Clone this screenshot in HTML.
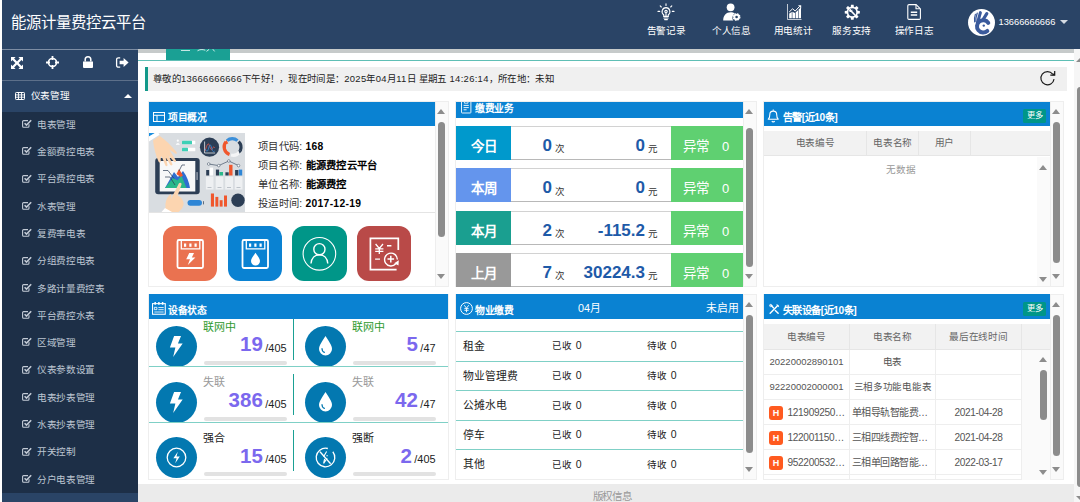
<!DOCTYPE html>
<html lang="zh-CN">
<head>
<meta charset="utf-8">
<title>能源计量费控云平台</title>
<style>
*{box-sizing:border-box;margin:0;padding:0}
html,body{width:1080px;height:502px;overflow:hidden;background:#fff}
body{position:relative;font-family:"Liberation Sans",sans-serif;font-size:12px;color:#333}
.abs{position:absolute}
svg{display:block;position:absolute;overflow:visible}
/* header */
#hdr{left:2px;top:0;width:1078px;height:49px;background:#2a4466}
#title{left:9px;top:11px;font-size:15.350px;color:#fff;white-space:nowrap;line-height:24px}
.nav{top:0;width:62px;height:49px;text-align:center;color:#fff;font-size:9.600px;white-space:nowrap}
.nav span{position:absolute;left:-10px;right:-10px;top:23.500px;line-height:14px;text-align:center;letter-spacing:-0.3px}
/* sidebar */
#side{left:2px;top:49px;width:136px;height:453px;background:#1d2f47}
#tool{left:0;top:0;width:136px;height:32px;background:#2a4466;border-top:1px solid #7d8da3;border-bottom:1px solid #5d708a}
#grp{left:0;top:32px;width:136px;height:30.500px;background:#2a4466;color:#fff;font-size:9.600px;letter-spacing:-.4px;line-height:29px}
.mi{left:0;width:136px;height:27px;line-height:27px;color:#bcc5d1;font-size:9.600px;letter-spacing:-.4px;white-space:nowrap}
.mi b{position:absolute;left:35.200px;top:.8px;font-weight:normal}
/* content */
#shadow{left:138px;top:48.800px;width:936px;height:4px;background:#c6caca}
#tab{left:165.600px;top:49px;width:64.500px;height:11.500px;background:#1aa094}
#tline{left:138px;top:60px;width:936px;height:1px;background:#5fbfb5}
#note{left:145px;top:67px;width:922px;height:24px;background:#f0f0f0;border-left:3px solid #12998a;font-size:9.45px;letter-spacing:.3px;line-height:24px;color:#222;white-space:nowrap;padding-left:5px}
.panel{background:#fff}
.ph{background:#0a82d2;color:#fff;font-weight:bold;font-size:11px;white-space:nowrap;letter-spacing:-.42px}
.sb{background:#fafafa;border:1px solid #eee}
.thumb{background:#8c8c8c;border-radius:4px}
.arr-u{width:0;height:0;border-left:4.5px solid transparent;border-right:4.5px solid transparent;border-bottom:5px solid #8c8c8c}
.arr-d{width:0;height:0;border-left:4.5px solid transparent;border-right:4.5px solid transparent;border-top:5px solid #8c8c8c}

.wrap{border:1px solid #eee;background:#fff}
.pi{font-size:10.300px;letter-spacing:.3px;line-height:14px;white-space:nowrap;color:#333}
.pi b{color:#000}
.btn{top:226px;width:54.500px;height:54.500px;border-radius:12px}
.prow{left:456px;width:287px;height:34px;border:1px solid #d2d2d2;border-bottom:1px solid #b8b8b8;background:#fff}
.plab{left:-1px;top:-1px;width:55px;height:34px;color:#fff;font-weight:bold;font-size:13.5px;line-height:42px;text-align:center}
.pgreen{left:214px;top:-1px;width:73px;height:34px;background:#5fd071;color:#fff;font-size:13.5px;line-height:42px;white-space:nowrap}
.num{color:#1e5aa8;font-weight:bold;font-size:17px;line-height:20px;white-space:nowrap;text-align:right}
.unit{font-size:9.5px;color:#333;line-height:12px}
.th{background:#f2f2f2;color:#666;font-size:9.6px;letter-spacing:-.2px;text-align:center;white-space:nowrap;border-right:1px solid #e6e6e6;border-bottom:1px solid #e6e6e6}
.more{background:#009688;color:#fff;font-size:8.2px;line-height:14.600px;text-align:center;border-radius:1.5px;width:23.300px;height:14.600px;font-weight:normal;font-family:"Liberation Serif",serif}

.circ{width:41px;height:41px;border-radius:50%;background:#0378b0}
.dl{font-size:11px;line-height:14px;white-space:nowrap}
.dn{color:#7b68ee;font-weight:bold;font-size:20.500px;line-height:24px;white-space:nowrap;text-align:right}
.dn i{font-style:normal;font-weight:normal;color:#222;font-size:10.900px;margin-left:2.500px;position:relative;top:.9px}
.bar{height:4px;border-radius:2px;background:#e2e2e2;width:83px}
.vsep{width:1px;background:#1aa094;height:41px}
.hsep{height:1px;background:#7fd0c6}
.fee{font-size:10.800px;line-height:14px;color:#222;white-space:nowrap}
.fee2{font-size:9.500px;line-height:14px;color:#222;white-space:nowrap;word-spacing:2.500px;letter-spacing:-.5px}
.fee2 u{text-decoration:none;font-size:10.500px}
.td{font-size:9.500px;letter-spacing:-.3px;color:#555;white-space:nowrap;overflow:hidden;border-right:1px solid #eee;border-bottom:1px solid #eee;height:25px;line-height:24px;text-align:center}
.hb{width:14px;height:14px;border-radius:3px;background:#ff5a1f;color:#fff;font-weight:bold;font-size:9px;line-height:14px;text-align:center}
#foot{left:138px;top:484px;width:936px;padding-left:12px;letter-spacing:-.3px;height:18px;background:#ebebeb;color:#999;font-size:10.5px;line-height:24px;text-align:center}
</style>
</head>
<body>
<!-- HEADER -->
<div id="hdr" class="abs">
  <div id="title" class="abs">能源计量费控云平台</div>

  <!-- nav: alarm -->
  <div class="nav abs" style="left:633px"><span>告警记录</span>
    <svg style="left:22px;top:3px" width="18" height="18" viewBox="0 0 18 18" fill="none" stroke="#fff" stroke-width="1.1" stroke-linecap="round">
      <path d="M9 4.6a4 4 0 0 1 2.3 7.2v1.6H6.7v-1.6A4 4 0 0 1 9 4.6z"/><path d="M6.9 15h4.2M7.6 16.6h2.8"/>
      <circle cx="9" cy="8.6" r="1.2"/><path d="M9 9.8v3.4"/>
      <path d="M9 0.8v1.6M3.2 2.9l1.1 1.1M14.8 2.9l-1.1 1.1M1 8.4h1.7M17 8.4h-1.7"/>
    </svg></div>
  <!-- nav: person -->
  <div class="nav abs" style="left:698.500px"><span>个人信息</span>
    <svg style="left:21px;top:3px" width="19" height="18" viewBox="0 0 19 18" fill="#fff">
      <circle cx="8.6" cy="4.3" r="3.9"/>
      <path d="M1.2 17.5c0-5.2 3-8.3 7.4-8.3 1.8 0 3.2.5 4.3 1.4a4.6 4.6 0 0 0-1.6 6.9z"/>
      <circle cx="14.6" cy="14" r="3.3" stroke="#fff" stroke-width="1.2" stroke-dasharray="1.5 1.1" fill="#fff"/>
      <circle cx="14.6" cy="14" r="1.3" fill="#2a4466"/>
    </svg></div>
  <!-- nav: stats -->
  <div class="nav abs" style="left:760.200px"><span>用电统计</span>
    <svg style="left:24.500px;top:4px" width="15" height="16" viewBox="0 0 15 16" fill="#fff">
      <path d="M0.500 0v15.500H14.500" fill="none" stroke="#fff" stroke-width="0.800" opacity=".9"/>
      <path d="M2.200 14.200V9.600l2.600-1.600v6.200zM5.400 14.200V7.800l2.600 1.200v5.200zM8.600 14.200V8.600l2.400-2.400v8zM11.600 14.200V5.400l2.400-2.200v11z"/>
      <path d="M2.200 8l3.400-3.200 2.600 2.200 4.400-4.600" fill="none" stroke="#fff" stroke-width="1"/><path d="M11 1.200h3.200v3.200z"/>
    </svg></div>
  <!-- nav: support -->
  <div class="nav abs" style="left:818.800px"><span>服务支持</span>
    <svg style="left:22.800px;top:3.700px" width="16.600" height="16.600" viewBox="0 0 18 18">
      <path d="M14.86 7.30 L17.18 7.57 L17.18 10.43 L14.86 10.70 L14.35 11.94 L15.79 13.77 L13.77 15.79 L11.94 14.35 L10.70 14.86 L10.43 17.18 L7.57 17.18 L7.30 14.86 L6.06 14.35 L4.23 15.79 L2.21 13.77 L3.65 11.94 L3.14 10.70 L0.82 10.43 L0.82 7.57 L3.14 7.30 L3.65 6.06 L2.21 4.23 L4.23 2.21 L6.06 3.65 L7.30 3.14 L7.57 0.82 L10.43 0.82 L10.70 3.14 L11.94 3.65 L13.77 2.21 L15.79 4.23 L14.35 6.06z M9 4.700a4.300 4.300 0 1 0 0 8.600a4.300 4.300 0 1 0 0-8.600z" fill="#fff" fill-rule="evenodd"/>
      <path d="M6.800 6.600l5.600 5.800" stroke="#fff" stroke-width="1.700" stroke-linecap="round"/><path d="M5.600 7.800a2.200 2.200 0 0 1 2.600-2.600l-1.200 1.200.9.900 1.200-1.200a2.200 2.200 0 0 1-2.600 2.600z" fill="#fff"/>
    </svg></div>
  <!-- nav: log -->
  <div class="nav abs" style="left:881px"><span>操作日志</span>
    <svg style="left:24px;top:4px" width="14" height="16" viewBox="0 0 14 16" fill="none" stroke="#fff" stroke-width="1.1" stroke-linejoin="round">
      <path d="M2 0.6h7.2l4.2 4.2v9.4a1.2 1.2 0 0 1-1.2 1.2H2A1.2 1.2 0 0 1 .8 14.2V1.8A1.2 1.2 0 0 1 2 .6z"/><path d="M9 .8v4h4"/>
      <path d="M3.8 8.2h6.4M3.8 11h6.4" stroke-width="1.4"/>
    </svg></div>
  <!-- avatar -->
  <div class="abs" style="left:966.100px;top:8.700px;width:27.200px;height:27.200px;border-radius:50%;background:#fff"></div>
  <svg style="left:966.100px;top:8.700px" width="27.200" height="27.200" viewBox="0 0 27.200 27.200" fill="none" stroke="#3a5a9c" stroke-linecap="round">
    <path d="M20.280 13.840A6.200 6.200 0 1 0 19.350 22" stroke-width="4"/>
    <path d="M9.600 13.500L12.400 3.600" stroke-width="3"/><path d="M14.600 11.400L18.800 4.700" stroke-width="3.200"/>
    <path d="M7.400 5.200C6.400 8 6.200 10.500 6.600 13" stroke-width="1.100"/><path d="M9.200 4.200C8 7.500 7.600 10 7.900 12.500" stroke-width="1.300"/>
    <circle cx="15.800" cy="16.600" r="1.200" fill="#3a5a9c" stroke="none"/>
  </svg>
  <div class="abs" style="left:996.5px;top:15px;font-size:9.300px;line-height:14px;color:#fff;white-space:nowrap">13666666666</div>
  <div class="abs" style="left:1057.500px;top:19.800px;width:0;height:0;border-left:4px solid transparent;border-right:4px solid transparent;border-top:4px solid #d5dbe3"></div>
</div>

<!-- SIDEBAR -->
<div id="side" class="abs">

  <div id="tool" class="abs">
    <svg style="left:9px;top:6.500px" width="12" height="12" viewBox="0 0 12 12" fill="#fff"><path d="M0 0h4.600L3.100 1.500 6 4.400 8.900 1.500 7.400 0H12v4.600l-1.500-1.500L7.600 6l2.900 2.900L12 7.400V12H7.400l1.500-1.500L6 7.600 3.100 10.500 4.600 12H0V7.400l1.500 1.500L4.400 6 1.500 3.100 0 4.600z"/></svg>
    <svg style="left:43.500px;top:6px" width="13" height="13" viewBox="0 0 13 13" fill="none" stroke="#fff"><circle cx="6.500" cy="6.500" r="4" stroke-width="1.600"/><path d="M6.500 0v4M6.500 9v4M0 6.500h4M9 6.500h4" stroke-width="1.800"/></svg>
    <svg style="left:80.500px;top:6px" width="10" height="12" viewBox="0 0 10 12" fill="#fff"><path d="M0 5.500h10V11a1 1 0 0 1-1 1H1a1 1 0 0 1-1-1z"/><path d="M2.200 5.500V3.600a2.800 2.800 0 0 1 5.600 0v1.900" fill="none" stroke="#fff" stroke-width="1.500"/></svg>
    <svg style="left:114px;top:6.500px" width="13" height="11" viewBox="0 0 13 11" fill="#fff"><path d="M4.200 .8H2.400A1.800 1.800 0 0 0 .6 2.600v5.800a1.800 1.800 0 0 0 1.800 1.800h1.800" fill="none" stroke="#fff" stroke-width="1.300"/><path d="M3.600 3.700h4V1l5 4.500-5 4.500V7.300h-4z"/></svg>
  </div>
  <div id="grp" class="abs">
    <svg style="left:13px;top:10.500px" width="10" height="8" viewBox="0 0 10 8" fill="none" stroke="#fff"><rect x=".5" y=".5" width="9" height="7" rx=".8" stroke-width="1"/><path d="M.5 2.900h9M.5 5.200h9M3.500 .5v7M6.500 .5v7" stroke-width=".9"/></svg>
    <span class="abs" style="left:28.800px">仪表管理</span>
    <div class="abs" style="left:121.500px;top:12.500px;width:0;height:0;border-left:4px solid transparent;border-right:4px solid transparent;border-bottom:4px solid #fff"></div>
  </div>
  <div class="mi abs" style="top:61px"><svg style="left:20px;top:9px" width="10" height="9" viewBox="0 0 10 9" fill="none" stroke="#c3cbd6"><path d="M7 5.200v2a1 1 0 0 1-1 1H1.600a1 1 0 0 1-1-1V2.600a1 1 0 0 1 1-1H6" stroke-width="1.100"/><path d="M2.600 4.200l1.900 1.900L9.200 1.300" stroke-width="1.600"/></svg><b>电表管理</b></div>
  <div class="mi abs" style="top:88.3px"><svg style="left:20px;top:9px" width="10" height="9" viewBox="0 0 10 9" fill="none" stroke="#c3cbd6"><path d="M7 5.200v2a1 1 0 0 1-1 1H1.600a1 1 0 0 1-1-1V2.600a1 1 0 0 1 1-1H6" stroke-width="1.100"/><path d="M2.600 4.200l1.900 1.900L9.200 1.300" stroke-width="1.600"/></svg><b>金额费控电表</b></div>
  <div class="mi abs" style="top:115.6px"><svg style="left:20px;top:9px" width="10" height="9" viewBox="0 0 10 9" fill="none" stroke="#c3cbd6"><path d="M7 5.200v2a1 1 0 0 1-1 1H1.600a1 1 0 0 1-1-1V2.600a1 1 0 0 1 1-1H6" stroke-width="1.100"/><path d="M2.600 4.200l1.900 1.900L9.200 1.300" stroke-width="1.600"/></svg><b>平台费控电表</b></div>
  <div class="mi abs" style="top:142.9px"><svg style="left:20px;top:9px" width="10" height="9" viewBox="0 0 10 9" fill="none" stroke="#c3cbd6"><path d="M7 5.200v2a1 1 0 0 1-1 1H1.600a1 1 0 0 1-1-1V2.600a1 1 0 0 1 1-1H6" stroke-width="1.100"/><path d="M2.600 4.200l1.900 1.900L9.200 1.300" stroke-width="1.600"/></svg><b>水表管理</b></div>
  <div class="mi abs" style="top:170.2px"><svg style="left:20px;top:9px" width="10" height="9" viewBox="0 0 10 9" fill="none" stroke="#c3cbd6"><path d="M7 5.200v2a1 1 0 0 1-1 1H1.600a1 1 0 0 1-1-1V2.600a1 1 0 0 1 1-1H6" stroke-width="1.100"/><path d="M2.600 4.200l1.900 1.900L9.200 1.300" stroke-width="1.600"/></svg><b>复费率电表</b></div>
  <div class="mi abs" style="top:197.5px"><svg style="left:20px;top:9px" width="10" height="9" viewBox="0 0 10 9" fill="none" stroke="#c3cbd6"><path d="M7 5.200v2a1 1 0 0 1-1 1H1.600a1 1 0 0 1-1-1V2.600a1 1 0 0 1 1-1H6" stroke-width="1.100"/><path d="M2.600 4.200l1.900 1.900L9.200 1.300" stroke-width="1.600"/></svg><b>分组费控电表</b></div>
  <div class="mi abs" style="top:224.8px"><svg style="left:20px;top:9px" width="10" height="9" viewBox="0 0 10 9" fill="none" stroke="#c3cbd6"><path d="M7 5.200v2a1 1 0 0 1-1 1H1.600a1 1 0 0 1-1-1V2.600a1 1 0 0 1 1-1H6" stroke-width="1.100"/><path d="M2.600 4.200l1.900 1.900L9.200 1.300" stroke-width="1.600"/></svg><b>多路计量费控表</b></div>
  <div class="mi abs" style="top:252.1px"><svg style="left:20px;top:9px" width="10" height="9" viewBox="0 0 10 9" fill="none" stroke="#c3cbd6"><path d="M7 5.200v2a1 1 0 0 1-1 1H1.600a1 1 0 0 1-1-1V2.600a1 1 0 0 1 1-1H6" stroke-width="1.100"/><path d="M2.600 4.200l1.900 1.900L9.200 1.300" stroke-width="1.600"/></svg><b>平台费控水表</b></div>
  <div class="mi abs" style="top:279.4px"><svg style="left:20px;top:9px" width="10" height="9" viewBox="0 0 10 9" fill="none" stroke="#c3cbd6"><path d="M7 5.200v2a1 1 0 0 1-1 1H1.600a1 1 0 0 1-1-1V2.600a1 1 0 0 1 1-1H6" stroke-width="1.100"/><path d="M2.600 4.200l1.900 1.900L9.200 1.300" stroke-width="1.600"/></svg><b>区域管理</b></div>
  <div class="mi abs" style="top:306.7px"><svg style="left:20px;top:9px" width="10" height="9" viewBox="0 0 10 9" fill="none" stroke="#c3cbd6"><path d="M7 5.200v2a1 1 0 0 1-1 1H1.600a1 1 0 0 1-1-1V2.600a1 1 0 0 1 1-1H6" stroke-width="1.100"/><path d="M2.600 4.200l1.900 1.900L9.200 1.300" stroke-width="1.600"/></svg><b>仪表参数设置</b></div>
  <div class="mi abs" style="top:334px"><svg style="left:20px;top:9px" width="10" height="9" viewBox="0 0 10 9" fill="none" stroke="#c3cbd6"><path d="M7 5.200v2a1 1 0 0 1-1 1H1.600a1 1 0 0 1-1-1V2.600a1 1 0 0 1 1-1H6" stroke-width="1.100"/><path d="M2.600 4.200l1.900 1.900L9.200 1.300" stroke-width="1.600"/></svg><b>电表抄表管理</b></div>
  <div class="mi abs" style="top:361.3px"><svg style="left:20px;top:9px" width="10" height="9" viewBox="0 0 10 9" fill="none" stroke="#c3cbd6"><path d="M7 5.200v2a1 1 0 0 1-1 1H1.600a1 1 0 0 1-1-1V2.600a1 1 0 0 1 1-1H6" stroke-width="1.100"/><path d="M2.600 4.200l1.900 1.900L9.200 1.300" stroke-width="1.600"/></svg><b>水表抄表管理</b></div>
  <div class="mi abs" style="top:388.6px"><svg style="left:20px;top:9px" width="10" height="9" viewBox="0 0 10 9" fill="none" stroke="#c3cbd6"><path d="M7 5.200v2a1 1 0 0 1-1 1H1.600a1 1 0 0 1-1-1V2.600a1 1 0 0 1 1-1H6" stroke-width="1.100"/><path d="M2.600 4.200l1.900 1.900L9.200 1.300" stroke-width="1.600"/></svg><b>开关控制</b></div>
  <div class="mi abs" style="top:415.9px"><svg style="left:20px;top:9px" width="10" height="9" viewBox="0 0 10 9" fill="none" stroke="#c3cbd6"><path d="M7 5.200v2a1 1 0 0 1-1 1H1.600a1 1 0 0 1-1-1V2.600a1 1 0 0 1 1-1H6" stroke-width="1.100"/><path d="M2.600 4.200l1.900 1.900L9.200 1.300" stroke-width="1.600"/></svg><b>分户电表管理</b></div>
  <div class="abs" style="left:0;top:444px;width:136px;height:9px;background:#2a4466"></div>
</div>

<!-- CONTENT CHROME -->
<div id="shadow" class="abs"></div>
<div id="tab" class="abs"><div class="abs" style="left:15.500px;top:0.500px;width:8.500px;height:1.200px;background:#fff;opacity:.75"></div><svg style="left:31px;top:0" width="19" height="3" viewBox="0 0 19 3" fill="none" stroke="#fff" stroke-width="1" opacity=".8"><path d="M.5 1.800c2-1.400 5-1.600 7.800-.6M9.500 2.400l2.600-2M15.800 .2l1.800 2.200"/></svg></div>
<div id="tline" class="abs"></div>
<div id="note" class="abs">尊敬的13666666666下午好！，现在时间是：2025年04月11日 星期五 14:26:14，所在地：未知</div>

<!-- PANELS -->

<!-- ============ PANEL: project overview ============ -->
<div class="abs wrap" style="left:148px;top:101px;width:301px;height:186px"></div>
<div class="abs ph" style="left:149px;top:101.5px;width:286px;height:24.5px"></div>
<svg style="left:153px;top:111.800px" width="12" height="10" viewBox="0 0 12 10" fill="none" stroke="#fff" stroke-width="1"><rect x=".5" y=".5" width="11" height="9"/><path d="M.5 3.300h11M4 3.300v6.200"/></svg>
<div class="abs ph" style="left:168px;top:111px;background:none;line-height:14px;font-size:9.800px">项目概况</div>
<div id="illus" class="abs" style="left:149px;top:133px;width:95.500px;height:78.500px;background:#d9dde1;overflow:hidden"><svg style="left:0;top:0" width="95.5" height="79" viewBox="0 0 95.5 79">
<rect width="95.5" height="79" fill="#d9dde1"/>
<!-- person + bars -->
<circle cx="28.800" cy="7.700" r="1.100" fill="#fff"/><path d="M26.800 11.800c0-2.200 4-2.200 4 0z" fill="#fff"/>
<rect x="33" y="7.800" width="13.300" height="3.500" rx=".6" fill="#fff"/><rect x="33" y="7.800" width="10" height="3.500" rx=".6" fill="#3dd0b6"/>
<rect x="33" y="14.800" width="13.300" height="3.500" rx=".6" fill="#fff"/><rect x="33" y="14.800" width="6" height="3.500" rx=".6" fill="#3dd0b6"/>
<!-- dark circle chart -->
<circle cx="60.500" cy="14.200" r="9.600" fill="#2c3e55"/>
<path d="M55.600 8.500v11.500h10.500" fill="none" stroke="#fff" stroke-width=".7"/>
<path d="M56.200 18c1.500-6 3-9 4-6s2 6 3 4 1.500-3 2.500-1" fill="none" stroke="#e8574a" stroke-width=".8"/>
<path d="M56.200 16c1.500 3 2.500 3 3.500-1s2-4 3 0 1.500 4 3 3" fill="none" stroke="#3b8fd9" stroke-width=".8"/>
<!-- donut -->
<g fill="none" stroke-width="3.200">
<path d="M78 7.600A8 8 0 0 1 88.500 7.600" stroke="#3b8fd9"/>
<path d="M89.600 8.600A8 8 0 0 1 91.300 17.500" stroke="#2c3e55"/>
<path d="M90.600 18.800A8 8 0 0 1 82 22" stroke="#f4f5f6"/>
<path d="M80.500 21.400A8 8 0 0 1 77 8.700" stroke="#f0572d"/>
</g>
<path d="M75 11.500l2.500-4.500 1.800 3.600z" fill="#f0572d"/><path d="M93.200 17.500l-2.600 3.200-1.200-3.800z" fill="#2c3e55"/>
<!-- tablet -->
<rect x="6.200" y="25" width="44.500" height="36.200" rx="3" fill="#2c3e55"/>
<rect x="10.700" y="28" width="35.600" height="30.500" fill="#f7f8f8"/>
<rect x="47.300" y="39" width="1.600" height="8" rx=".6" fill="#8a95a3"/>
<path d="M16 55l9-16 4 5 5-6c4 5 6 11 7 17z" fill="#2f6fd0"/>
<path d="M16 55l8-10 4.500 2.500 4-5 5 12.500z" fill="#2bb88a"/>
<path d="M27.500 41l2.500-5 4 6.500-2.500 1.500z" fill="#f0572d"/>
<path d="M14 37.500h5l6 8M16 44h5l5 8M36 32h-3l-3 6" fill="none" stroke="#2c3e55" stroke-width=".7"/>
<!-- sleeve + hand top-left -->
<path d="M0 0h6L0 3.500z" fill="#1a8fe0"/><path d="M6 0L0 3.500v5L10.500 1.800 9.500 0z" fill="#fff"/>
<path d="M4 7.500L10.500 2.800c5.500 3.800 11.500 9.500 17 16.200 1 1.300-.3 2.400-1.500 1.600l-5.800-4 6.600 10.600c.9 1.500-.8 2.600-1.900 1.300l-5.600-6.600 4 8.800c.7 1.600-1.200 2.400-2.100 1l-4.700-7.600 2 7.600c.4 1.600-1.600 2-2.200.6l-3.800-9.300c-.8 1.500-1 3.300-.7 5.200.2 1.500-1.800 1.800-2.300.4C6.800 22.500 4.800 15 4 7.500z" fill="#fcd5b0"/>
<!-- line chart + bars -->
<path d="M59.700 31l10 1.600 10.100-4.600 9.700 4.600" fill="none" stroke="#2c3e55" stroke-width=".6"/>
<g fill="#fff" stroke="#2c3e55" stroke-width=".5"><circle cx="59.700" cy="31" r="1.300"/><circle cx="69.700" cy="32.600" r="1.300"/><circle cx="79.800" cy="28" r="1.300"/><circle cx="89.500" cy="32.600" r="1.300"/></g>
<g fill="#eef0f2"><rect x="56.900" y="43.500" width="7.600" height="13"/><rect x="66.700" y="43.500" width="7.600" height="13"/><rect x="76.200" y="43.500" width="7.800" height="13"/><rect x="85.800" y="43.500" width="7.700" height="13"/></g>
<g fill="#2c3e55"><rect x="57.200" y="37" width="3.100" height="5.500"/><rect x="66.900" y="36.600" width="3.200" height="5.900"/><rect x="76.400" y="39.300" width="3.300" height="3.200"/><rect x="86.100" y="37" width="3.300" height="5.500"/></g>
<rect x="60.600" y="34.600" width="3.500" height="7.900" fill="#fff"/><rect x="70.400" y="39" width="3.600" height="3.500" fill="#2bb88a"/><rect x="80.100" y="31.800" width="3.400" height="10.700" fill="#f0572d"/><rect x="89.800" y="36.600" width="3.400" height="5.900" fill="#2e86d6"/>
<g fill="#9aa3ad"><rect x="58.500" y="54.300" width="4" height=".6"/><rect x="68.500" y="54.300" width="4" height=".6"/><rect x="78" y="54.300" width="4" height=".6"/><rect x="87.500" y="54.300" width="4" height=".6"/></g>
<!-- bottom row -->
<rect x="38.500" y="66.900" width="14.500" height="5.800" rx="2.900" fill="#2e86d6"/><rect x="54.300" y="68.200" width=".7" height="3.200" fill="#2c3e55"/>
<g fill="#f0572d"><rect x="61.900" y="60.500" width="3.100" height="13.100"/><rect x="66.400" y="63.900" width="2.900" height="9.700"/><rect x="70.700" y="67.200" width="2.900" height="6.400"/><rect x="75" y="62.500" width="3" height="11.100"/></g>
<circle cx="89" cy="67.200" r="6.700" fill="#2c3e55"/>
<!-- hand bottom -->
<path d="M13 79l3.500-4.500c-.5-5 1-9.500 4-12.500.8-.8 1.800-.3 1.800.8l-.3 3.200 7.800-15.500c.9-1.700 3.300-.7 2.700 1.100l-3.800 10.800c3 1.500 5.300 4 5.800 7.200.5 3.500-1.500 6.900-5 9.400z" fill="#fcd5b0"/>
<path d="M12.500 79l3.500-4 7 4z" fill="#fff"/>
</svg></div>
<div class="abs pi" style="left:258px;top:140px">项目代码: <b>168</b></div>
<div class="abs pi" style="left:258px;top:159px">项目名称: <b>能源费控云平台</b></div>
<div class="abs pi" style="left:258px;top:178px">单位名称: <b>能源费控</b></div>
<div class="abs pi" style="left:258px;top:197px">投运时间: <b>2017-12-19</b></div>
<div class="abs" style="left:149px;top:212px;width:286px;height:1px;background:#e4e4e4"></div>
<div class="abs btn" style="left:162.800px;background:#ea7250"><svg style="left:0;top:0" width="54.500" height="54.500" viewBox="0 0 54.500 54.500" fill="none" stroke="#fff"><rect x="14.500" y="14" width="25.500" height="28" rx="1.400" stroke-width="1.800"/><path d="M18.300 14.600v8.300h18.500v-8.300" stroke-width="1.300"/><g fill="#fff" stroke="none"><rect x="21" y="17.500" width="2.200" height="3.300"/><rect x="26.300" y="17.500" width="2.200" height="3.300"/><rect x="31.500" y="17.500" width="2.200" height="3.300"/><path d="M26.200 27.100h4.800l-2.200 4.400h3.600l-7.600 7.400 2.200-5.600h-3.800z"/></g></svg></div>
<div class="abs btn" style="left:227.500px;background:#0a82d2"><svg style="left:0;top:0" width="54.500" height="54.500" viewBox="0 0 54.500 54.500" fill="none" stroke="#fff"><rect x="14.500" y="14" width="25.500" height="28" rx="1.400" stroke-width="1.800"/><path d="M18.300 14.600v8.300h18.500v-8.300" stroke-width="1.300"/><g fill="#fff" stroke="none"><rect x="21" y="17.500" width="2.200" height="3.300"/><rect x="26.300" y="17.500" width="2.200" height="3.300"/><rect x="31.500" y="17.500" width="2.200" height="3.300"/><path d="M27.500 26.800c2.300 3.400 4.500 5.800 4.500 8.200a4.500 4.500 0 0 1-9 0c0-2.400 2.200-4.800 4.500-8.200z"/></g></svg></div>
<div class="abs btn" style="left:292.400px;background:#009688"><svg style="left:0;top:0" width="54.500" height="54.500" viewBox="0 0 54.500 54.500" fill="none" stroke="#fff"><circle cx="27.400" cy="27.800" r="16.300" stroke-width="1.100"/><circle cx="27.400" cy="23.200" r="5.600" stroke-width="1.400"/><path d="M19 37.500c.5-5.500 4-8.800 8.400-8.800s7.900 3.300 8.400 8.800" stroke-width="1.400"/></svg></div>
<div class="abs btn" style="left:356.700px;background:#b94a48"><svg style="left:0;top:0" width="54.500" height="54.500" viewBox="0 0 54.500 54.500" fill="none" stroke="#fff"><path d="M41.300 24V12.300H13.400v31.400h26.200" stroke-width="1.700"/><path d="M18.600 18l3.700 4.400 3.700-4.400M22.300 22.400v5.600M18.200 22.800h8.200M18.200 25.400h8.200" stroke-width="1.300"/><path d="M30 19.800h4.400M18.100 33.100h4.900" stroke-width="1.400"/><path d="M38.800 37.800a6.400 6.400 0 1 1 1.600-4.300" stroke-width="1.400"/><path d="M33.800 29.800v6.600M30.500 33.100h6.600" stroke-width="1.500"/><path d="M37.200 37.200l4.600-3 -.3 5.200z" fill="#fff" stroke="none"/></svg></div>
<div class="abs sb" style="left:435px;top:101px;width:14px;height:186px"></div>
<div class="abs arr-u" style="left:436.9px;top:109px"></div>
<div class="abs arr-d" style="left:436.9px;top:274px"></div>
<div class="abs thumb" style="left:437.9px;top:122px;width:7px;height:114.500px"></div>

<!-- ============ PANEL: payment ============ -->
<div class="abs wrap" style="left:455px;top:101px;width:301px;height:186px"></div>
<div class="abs ph" style="left:456px;top:101.500px;width:287px;height:16px"></div>
<div class="abs" style="left:460.800px;top:101.500px;width:11px;height:12px;overflow:hidden"><svg style="left:0;top:0" width="10.400" height="11.600" viewBox="0 0 10.400 11.600" fill="none" stroke="#fff" stroke-width=".9"><rect x=".5" y="-.6" width="9.400" height="11.600" rx=".6"/><path d="M3.400 0v1.200h3.600V0" stroke-width=".8"/><path d="M2.600 3.400h5.200M2.600 5.600h5.200M2.600 7.800h3" stroke-width=".9"/></svg></div>
<div class="abs ph" style="left:475.300px;top:102.200px;background:none;line-height:14px;font-size:9.800px">缴费业务</div>
<div class="abs prow" style="top:125.600px">
  <div class="abs plab" style="background:#0099cc">今日</div>
  <div class="abs num" style="left:45px;width:50px;top:9px">0</div><div class="abs unit" style="left:98px;top:16.500px">次</div>
  <div class="abs num" style="left:95px;width:93px;top:9px">0</div><div class="abs unit" style="left:191px;top:16.500px">元</div>
  <div class="abs pgreen"><span class="abs" style="left:12px;top:0">异常</span><span class="abs" style="left:51px;top:0;font-size:13px">0</span></div>
</div>
<div class="abs prow" style="top:168.400px">
  <div class="abs plab" style="background:#6495ed">本周</div>
  <div class="abs num" style="left:45px;width:50px;top:9px">0</div><div class="abs unit" style="left:98px;top:16.500px">次</div>
  <div class="abs num" style="left:95px;width:93px;top:9px">0</div><div class="abs unit" style="left:191px;top:16.500px">元</div>
  <div class="abs pgreen"><span class="abs" style="left:12px;top:0">异常</span><span class="abs" style="left:51px;top:0;font-size:13px">0</span></div>
</div>
<div class="abs prow" style="top:210.600px">
  <div class="abs plab" style="background:#1a9f90">本月</div>
  <div class="abs num" style="left:45px;width:50px;top:9px">2</div><div class="abs unit" style="left:98px;top:16.500px">次</div>
  <div class="abs num" style="left:95px;width:93px;top:9px">-115.2</div><div class="abs unit" style="left:191px;top:16.500px">元</div>
  <div class="abs pgreen"><span class="abs" style="left:12px;top:0">异常</span><span class="abs" style="left:51px;top:0;font-size:13px">0</span></div>
</div>
<div class="abs prow" style="top:252.5px">
  <div class="abs plab" style="background:#999999">上月</div>
  <div class="abs num" style="left:45px;width:50px;top:9px">7</div><div class="abs unit" style="left:98px;top:16.500px">次</div>
  <div class="abs num" style="left:95px;width:93px;top:9px">30224.3</div><div class="abs unit" style="left:191px;top:16.500px">元</div>
  <div class="abs pgreen"><span class="abs" style="left:12px;top:0">异常</span><span class="abs" style="left:51px;top:0;font-size:13px">0</span></div>
</div>
<div class="abs sb" style="left:742.5px;top:101px;width:14px;height:186px"></div>
<div class="abs arr-u" style="left:745.0px;top:109px"></div>
<div class="abs arr-d" style="left:745.0px;top:274px"></div>
<div class="abs thumb" style="left:746.0px;top:128px;width:7px;height:139px"></div>

<!-- ============ PANEL: alarms ============ -->
<div class="abs wrap" style="left:763px;top:101px;width:301px;height:186px"></div>
<div class="abs ph" style="left:764px;top:101.500px;width:286px;height:24.500px"></div>
<svg style="left:767.300px;top:108.800px" width="12.500" height="13.300" viewBox="0 0 11 12" fill="none" stroke="#fff" stroke-width="1"><path d="M1 9.200c1.200-1 1.400-2 1.400-4.200a3.100 3.100 0 0 1 6.200 0c0 2.200.2 3.200 1.400 4.200z" stroke-linejoin="round"/><path d="M4.300 10.800a1.300 1.300 0 0 0 2.400 0M5.500 .4v1.200"/></svg>
<div class="abs ph" style="left:782.500px;top:110.700px;background:none;line-height:14px;font-size:10.200px">告警[近10条]</div>
<div class="abs more" style="left:1023px;top:108.500px">更多</div>
<div class="abs th" style="left:764px;top:131.300px;width:103.300px;height:25px;line-height:23.500px">电表编号</div>
<div class="abs th" style="left:867.300px;top:131.300px;width:51.700px;height:25px;line-height:23.500px">电表名称</div>
<div class="abs th" style="left:919px;top:131.300px;width:52px;height:25px;line-height:23.500px">用户</div>
<div class="abs th" style="left:971px;top:131.300px;width:79px;height:25px;border-right:none"></div>
<div class="abs" style="left:764px;top:159px;width:273px;height:22px;line-height:22px;text-align:center;color:#999;font-size:9.600px;letter-spacing:-.2px;padding-left:1px">无数据</div>
<div class="abs" style="left:1037px;top:157px;width:13px;height:129px;background:#fafafa"></div>
<div class="abs arr-u" style="left:1039px;top:164.500px"></div>
<div class="abs arr-d" style="left:1039px;top:277px"></div>
<div class="abs sb" style="left:1050px;top:101px;width:14px;height:186px"></div>
<div class="abs arr-u" style="left:1051.9px;top:109px"></div>
<div class="abs arr-d" style="left:1051.9px;top:274px"></div>
<div class="abs thumb" style="left:1052.9px;top:121.500px;width:7px;height:141.500px"></div>


<!-- ============ PANEL: device status ============ -->
<div class="abs wrap" style="left:148px;top:294px;width:301px;height:186px"></div>
<div class="abs ph" style="left:149px;top:294.200px;width:299px;height:24.400px"></div>
<svg style="left:152.200px;top:301.800px" width="13.800" height="12.800" viewBox="0 0 13 12" fill="none" stroke="#fff" stroke-width="1"><rect x=".5" y="1.500" width="12" height="10"/><path d="M3 0v2.600M6.500 0v2.600M10 0v2.600" stroke-width="1.400"/><path d="M2.200 5h2.400v2.200H2.200zM6 5.200h5M6 7.200h5M2.200 9.400h8.800" stroke-width=".8"/></svg>
<div class="abs ph" style="left:168px;top:304px;background:none;line-height:14px;font-size:9.800px">设备状态</div>
<div class="abs circ" style="left:155.5px;top:325.9px"><svg style="left:13.300px;top:10px" width="14.400" height="21" viewBox="0 0 15 23" fill="#fff"><path d="M5.200 0h7.600L9.400 8.200h5.200L4.200 23l2.400-10.400H.6z"/></svg></div>
<div class="abs dl" style="left:202.7px;top:319.5px;color:#2e9a2e">联网中</div>
<div class="abs dn" style="left:203.5px;width:83px;top:332.4px">19<i>/405</i></div>
<div class="abs bar" style="left:203.5px;top:361px"></div>
<div class="abs circ" style="left:304.5px;top:325.9px"><svg style="left:14px;top:10px" width="13" height="20" viewBox="0 0 13 20" fill="#fff"><path d="M6.500 0C9.500 5 13 9 13 13a6.500 6.500 0 0 1-13 0C0 9 3.500 5 6.500 0z"/><path d="M3 12.500c0 2 .9 3.300 2.400 3.900" fill="none" stroke="#0378b0" stroke-width="1.200" stroke-linecap="round"/></svg></div>
<div class="abs dl" style="left:351.7px;top:319.5px;color:#2e9a2e">联网中</div>
<div class="abs dn" style="left:352.5px;width:83px;top:332.4px">5<i>/47</i></div>
<div class="abs bar" style="left:352.5px;top:361px"></div>
<div class="abs circ" style="left:155.5px;top:381.5px"><svg style="left:13.300px;top:10px" width="14.400" height="21" viewBox="0 0 15 23" fill="#fff"><path d="M5.200 0h7.600L9.400 8.200h5.200L4.200 23l2.400-10.400H.6z"/></svg></div>
<div class="abs dl" style="left:202.7px;top:375.1px;color:#9a9a9a">失联</div>
<div class="abs dn" style="left:203.5px;width:83px;top:388px">386<i>/405</i></div>
<div class="abs bar" style="left:203.5px;top:416.6px"></div>
<div class="abs circ" style="left:304.5px;top:381.5px"><svg style="left:14px;top:10px" width="13" height="20" viewBox="0 0 13 20" fill="#fff"><path d="M6.500 0C9.500 5 13 9 13 13a6.500 6.500 0 0 1-13 0C0 9 3.500 5 6.500 0z"/><path d="M3 12.500c0 2 .9 3.300 2.400 3.900" fill="none" stroke="#0378b0" stroke-width="1.200" stroke-linecap="round"/></svg></div>
<div class="abs dl" style="left:351.7px;top:375.1px;color:#9a9a9a">失联</div>
<div class="abs dn" style="left:352.5px;width:83px;top:388px">42<i>/47</i></div>
<div class="abs bar" style="left:352.5px;top:416.6px"></div>
<div class="abs circ" style="left:155.5px;top:437.1px"><svg style="left:10px;top:10px" width="21" height="21" viewBox="0 0 21 21" fill="none" stroke="#fff" stroke-width="1.300"><circle cx="10.500" cy="10.500" r="9.300"/><path d="M11.800 4.800l-4.400 6.400h3.200l-1.400 5 4.600-6.600h-3.300z" fill="#fff" stroke="none"/></svg></div>
<div class="abs dl" style="left:202.7px;top:430.7px;color:#222">强合</div>
<div class="abs dn" style="left:203.5px;width:83px;top:443.6px">15<i>/405</i></div>
<div class="abs bar" style="left:203.5px;top:472.2px"></div>
<div class="abs circ" style="left:304.5px;top:437.1px"><svg style="left:10px;top:10px" width="21" height="21" viewBox="0 0 21 21" fill="none" stroke="#fff" stroke-width="1.300"><circle cx="10.500" cy="10.500" r="9.300" stroke-dasharray="52 6.400" transform="rotate(-38 10.500 10.500)"/><path d="M11.600 4.600L8.600 9.800M12.800 8.800l-1.400 0M9.600 11.800l-1 4.600 3.600-5.200" stroke-width="1.100"/><path d="M5 4.800l10.600 12" stroke-width="1.300"/></svg></div>
<div class="abs dl" style="left:351.7px;top:430.7px;color:#222">强断</div>
<div class="abs dn" style="left:352.5px;width:83px;top:443.6px">2<i>/405</i></div>
<div class="abs bar" style="left:352.5px;top:472.2px"></div>
<div class="abs vsep" style="left:293px;top:318.5px;height:41px"></div>
<div class="abs vsep" style="left:293px;top:374.100px;height:41px"></div>
<div class="abs vsep" style="left:293px;top:429.700px;height:41px"></div>
<div class="abs hsep" style="left:149px;top:366px;width:299px"></div>
<div class="abs hsep" style="left:149px;top:421.500px;width:299px"></div>

<!-- ============ PANEL: property fees ============ -->
<div class="abs wrap" style="left:455px;top:294px;width:301px;height:186px"></div>
<div class="abs ph" style="left:456px;top:294.200px;width:287px;height:24.400px"></div>
<svg style="left:459.500px;top:301.500px" width="13" height="13" viewBox="0 0 13 13" fill="none" stroke="#fff" stroke-width="1"><circle cx="6.500" cy="6.500" r="5.900"/><path d="M4.200 3.200l2.300 3 2.300-3M6.500 6.200v4M4.400 6.600h4.200M4.400 8.300h4.200" stroke-width=".9"/></svg>
<div class="abs ph" style="left:475px;top:303.500px;background:none;line-height:14px;font-size:9.800px">物业缴费</div>
<div class="abs" style="left:578px;top:300.500px;color:#fff;font-size:10.800px;line-height:14px">04月</div>
<div class="abs" style="left:640px;width:99px;text-align:right;top:300.500px;color:#fff;font-size:10.800px;line-height:14px">未启用</div>
<div class="abs hsep" style="left:456px;top:330.800px;width:287px"></div>
<div class="abs fee" style="left:463px;top:338.500px">租金</div>
<div class="abs fee2" style="left:552px;top:338.300px">已收 <u>0</u></div>
<div class="abs fee2" style="left:647px;top:338.300px">待收 <u>0</u></div>
<div class="abs hsep" style="left:456px;top:360.5px;width:287px"></div>
<div class="abs fee" style="left:463px;top:368.5px">物业管理费</div>
<div class="abs fee2" style="left:552px;top:368.0px">已收 <u>0</u></div>
<div class="abs fee2" style="left:647px;top:368.0px">待收 <u>0</u></div>
<div class="abs hsep" style="left:456px;top:390px;width:287px"></div>
<div class="abs fee" style="left:463px;top:398px">公摊水电</div>
<div class="abs fee2" style="left:552px;top:397.5px">已收 <u>0</u></div>
<div class="abs fee2" style="left:647px;top:397.5px">待收 <u>0</u></div>
<div class="abs hsep" style="left:456px;top:419.5px;width:287px"></div>
<div class="abs fee" style="left:463px;top:427.5px">停车</div>
<div class="abs fee2" style="left:552px;top:427.0px">已收 <u>0</u></div>
<div class="abs fee2" style="left:647px;top:427.0px">待收 <u>0</u></div>
<div class="abs hsep" style="left:456px;top:449px;width:287px"></div>
<div class="abs fee" style="left:463px;top:457px">其他</div>
<div class="abs fee2" style="left:552px;top:456.5px">已收 <u>0</u></div>
<div class="abs fee2" style="left:647px;top:456.5px">待收 <u>0</u></div>
<div class="abs sb" style="left:742.5px;top:294px;width:14px;height:186px"></div>
<div class="abs arr-u" style="left:745.0px;top:302px"></div>
<div class="abs arr-d" style="left:745.0px;top:467px"></div>
<div class="abs thumb" style="left:746.0px;top:314.500px;width:7px;height:138.500px"></div>

<!-- ============ PANEL: lost devices ============ -->
<div class="abs wrap" style="left:763px;top:294px;width:301px;height:186px"></div>
<div class="abs ph" style="left:764px;top:294.200px;width:286px;height:24.400px"></div>
<svg style="left:768.500px;top:304px" width="10.500" height="10.500" viewBox="0 0 11 11" fill="none" stroke="#fff" stroke-width="1.500" stroke-linecap="round"><path d="M1.200 9.800l8-8.200M2 1.400l2.600 2.600M6.600 6.800l3 3"/><circle cx="1.800" cy="1.600" r="1.200" stroke-width=".9"/><path d="M8.200 .8a2 2 0 0 1 2 2" stroke-width=".9"/></svg>
<div class="abs ph" style="left:782.500px;top:304px;background:none;line-height:14px;font-size:10.200px;letter-spacing:-.45px">失联设备[近10条]</div>
<div class="abs more" style="left:1023px;top:301.500px">更多</div>
<div class="abs th" style="left:764px;top:324px;width:86px;height:25.500px;line-height:26px">电表编号</div>
<div class="abs th" style="left:850px;top:324px;width:86px;height:25.500px;line-height:26px">电表名称</div>
<div class="abs th" style="left:936px;top:324px;width:86px;height:25.500px;line-height:26px">最后在线时间</div>
<div class="abs th" style="left:1022px;top:324px;width:28px;height:25.500px;border-right:none"></div>
<div class="abs" style="left:1022px;top:349.500px;width:28px;height:130px;background:#fafafa"></div>
<div class="abs td" style="left:764px;top:349.5px;width:86px;letter-spacing:0">20220002890101</div>
<div class="abs td" style="left:850px;top:349.5px;width:86px">电表</div>
<div class="abs td" style="left:936px;top:349.5px;width:86px"></div>
<div class="abs td" style="left:764px;top:374.6px;width:86px;letter-spacing:0">92220002000001</div>
<div class="abs td" style="left:850px;top:374.6px;width:86px">三相多功能电能表</div>
<div class="abs td" style="left:936px;top:374.6px;width:86px"></div>
<div class="abs td" style="left:764px;top:399.7px;width:86px;text-align:left;padding-left:23.500px;font-size:10.100px;letter-spacing:-.33px;line-height:25.600px">121909250…</div><div class="abs hb" style="left:769.100px;top:405.7px">H</div>
<div class="abs td" style="left:850px;top:399.7px;width:86px;text-align:left;padding-left:2px;font-size:10px;letter-spacing:-.56px;line-height:25.600px">单相导轨智能费…</div>
<div class="abs td" style="left:936px;top:399.7px;width:86px;font-size:10.100px;letter-spacing:-.36px;line-height:25.600px">2021-04-28</div>
<div class="abs td" style="left:764px;top:424.8px;width:86px;text-align:left;padding-left:23.500px;font-size:10.100px;letter-spacing:-.33px;line-height:25.600px">122001150…</div><div class="abs hb" style="left:769.100px;top:430.8px">H</div>
<div class="abs td" style="left:850px;top:424.8px;width:86px;text-align:left;padding-left:2px;font-size:10px;letter-spacing:-.56px;line-height:25.600px">三相四线费控智…</div>
<div class="abs td" style="left:936px;top:424.8px;width:86px;font-size:10.100px;letter-spacing:-.36px;line-height:25.600px">2021-04-28</div>
<div class="abs td" style="left:764px;top:449.9px;width:86px;text-align:left;padding-left:23.500px;font-size:10.100px;letter-spacing:-.33px;line-height:25.600px">952200532…</div><div class="abs hb" style="left:769.100px;top:455.9px">H</div>
<div class="abs td" style="left:850px;top:449.9px;width:86px;text-align:left;padding-left:2px;font-size:10px;letter-spacing:-.56px;line-height:25.600px">三相单回路智能…</div>
<div class="abs td" style="left:936px;top:449.9px;width:86px;font-size:10.100px;letter-spacing:-.36px;line-height:25.600px">2022-03-17</div>
<div class="abs td" style="left:764px;top:475px;width:86px;height:4.500px;border-bottom:none"></div>
<div class="abs td" style="left:850px;top:475px;width:86px;height:4.500px;border-bottom:none"></div>
<div class="abs td" style="left:936px;top:475px;width:86px;height:4.500px;border-bottom:none"></div>
<div class="abs arr-u" style="left:1039px;top:357.300px"></div>
<div class="abs arr-d" style="left:1039px;top:470px"></div>
<div class="abs thumb" style="left:1039.500px;top:369.500px;width:7.500px;height:50px"></div>
<div class="abs sb" style="left:1050px;top:294px;width:14px;height:186px"></div>
<div class="abs arr-u" style="left:1051.9px;top:302px"></div>
<div class="abs arr-d" style="left:1051.9px;top:467px"></div>
<div class="abs thumb" style="left:1052.9px;top:315px;width:7px;height:141px"></div>



<!-- refresh icon -->
<svg style="left:1039px;top:70px" width="17" height="17" viewBox="-8.500 -8.200 17 17" fill="none" stroke="#1a1a1a" stroke-width="1.150"><path d="M6.540 .92A6.600 6.600 0 1 1 5.200 -4.060"/><path d="M7.200 -7.200v4.200H2.800" stroke-width="1.200"/><path d="M7.200 -3L4.200 -3 7.200 -5.600z" fill="#1a1a1a" stroke="none"/></svg>
<!-- page scrollbar (clipped by viewport) -->
<div class="abs" style="left:1074px;top:49px;width:6px;height:453px;background:#f6f6f6"></div>
<div class="abs" style="left:1076px;top:58px;width:0;height:0;border-left:4.500px solid transparent;border-right:4.500px solid transparent;border-bottom:4.500px solid #8c8c8c"></div>
<div class="abs" style="left:1076.500px;top:87.300px;width:7px;height:400px;border-radius:3.500px;background:#8c8c8c"></div>
<div class="abs" style="left:1076px;top:495.500px;width:0;height:0;border-left:4.500px solid transparent;border-right:4.500px solid transparent;border-top:4.500px solid #8c8c8c"></div>
<div id="foot" class="abs">版权信息</div>
</body>
</html>
